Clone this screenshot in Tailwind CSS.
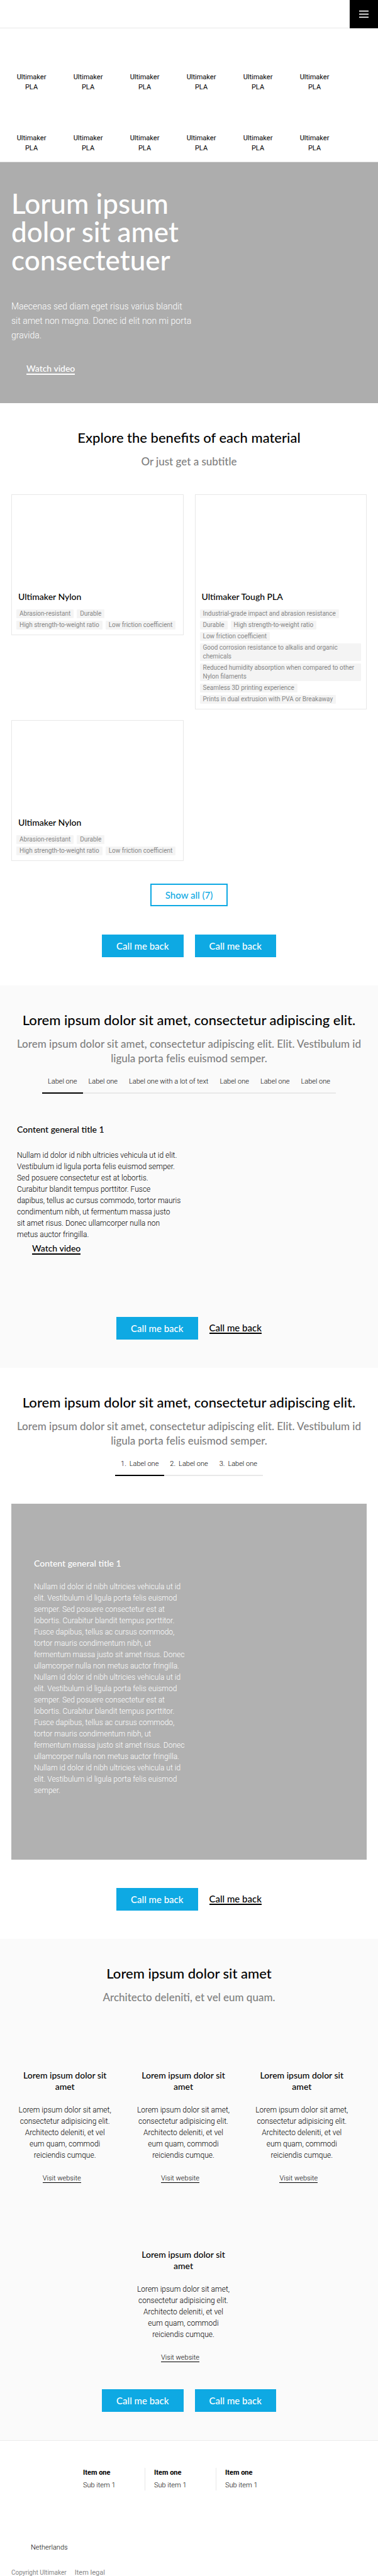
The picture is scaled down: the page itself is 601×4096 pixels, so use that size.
<!DOCTYPE html>
<html lang="en">
<head>
<meta charset="utf-8">
<meta name="viewport" content="width=device-width, initial-scale=1">
<title>Ultimaker materials</title>
<script src="https://cdn.jsdelivr.net/npm/@tailwindcss/browser@4"></script>
</head>
<body class="bg-white font-['Roboto',sans-serif] font-light text-black">

<header class="flex h-[45px] justify-end border-b border-[#e8e8e8]">
  <button type="button" aria-label="Menu" class="h-[45px] w-[45px] bg-black">
    <svg viewBox="0 0 60 60" class="h-[45px] w-[45px]" fill="#fff"><rect x="20" y="22.4" width="20" height="2.2"/><rect x="20" y="28.9" width="20" height="2.2"/><rect x="20" y="35.4" width="20" height="2.2"/></svg>
  </button>
</header>

<nav class="border-b border-[#e0e0e0] pt-[5px] pr-[56px] pb-[13px] pl-[5px]">
  <ul class="grid grid-cols-6 text-center text-[11px] leading-[16px] font-normal">
    <li class="pt-[65px]">Ultimaker<br>PLA</li>
    <li class="pt-[65px]">Ultimaker<br>PLA</li>
    <li class="pt-[65px]">Ultimaker<br>PLA</li>
    <li class="pt-[65px]">Ultimaker<br>PLA</li>
    <li class="pt-[65px]">Ultimaker<br>PLA</li>
    <li class="pt-[65px]">Ultimaker<br>PLA</li>
    <li class="pt-[65px]">Ultimaker<br>PLA</li>
    <li class="pt-[65px]">Ultimaker<br>PLA</li>
    <li class="pt-[65px]">Ultimaker<br>PLA</li>
    <li class="pt-[65px]">Ultimaker<br>PLA</li>
    <li class="pt-[65px]">Ultimaker<br>PLA</li>
    <li class="pt-[65px]">Ultimaker<br>PLA</li>
  </ul>
</nav>

<main>
  <section class="bg-[#adadad] px-[18px] pt-[43px] pb-[45px] text-white">
    <h1 class="font-['Lato',sans-serif] text-[44px] leading-[45px] font-medium">Lorum ipsum<br>dolor sit amet<br>consectetuer</h1>
    <p class="mt-[40px] text-[14px] leading-[23px]">Maecenas sed diam eget risus varius blandit<br>sit amet non magna. Donec id elit non mi porta<br>gravida.</p>
    <div class="mt-[33px] ml-[24px] flex">
      <a href="#" class="border-b-2 border-white font-['Lato',sans-serif] text-[14px] leading-[16px] font-medium">Watch video</a>
    </div>
  </section>

  <section class="px-[18px] pt-[40px] pb-[45px]">
    <h2 class="text-center font-['Lato',sans-serif] text-[22px] leading-[29px] font-medium">Explore the benefits of each material</h2>
    <p class="mt-[12px] text-center font-['Lato',sans-serif] text-[17px] leading-[23px] font-medium text-[#808080]">Or just get a subtitle</p>
    <div class="mt-[41px] grid grid-cols-2 items-start gap-x-[18px] gap-y-[17px]">
      <article class="border border-[#e8e8e8] pt-[152px] pr-[8px] pb-[8px] pl-[7px]">
        <h3 class="pl-[3px] font-['Lato',sans-serif] text-[14px] leading-[20px] font-medium">Ultimaker Nylon</h3>
        <ul class="mt-[10px] flex flex-wrap gap-x-[5px] gap-y-[4px] text-[10px] leading-[14px] font-normal text-[#868686]">
          <li class="rounded-[1px] bg-[#f4f4f4] px-[5px]">Abrasion-resistant</li>
          <li class="rounded-[1px] bg-[#f4f4f4] px-[5px]">Durable</li>
          <li class="rounded-[1px] bg-[#f4f4f4] px-[5px]">High strength-to-weight ratio</li>
          <li class="rounded-[1px] bg-[#f4f4f4] px-[5px]">Low friction coefficient</li>
        </ul>
      </article>
      <article class="border border-[#e8e8e8] pt-[152px] pr-[8px] pb-[8px] pl-[7px]">
        <h3 class="pl-[3px] font-['Lato',sans-serif] text-[14px] leading-[20px] font-medium">Ultimaker Tough PLA</h3>
        <ul class="mt-[10px] flex flex-wrap gap-x-[5px] gap-y-[4px] text-[10px] leading-[14px] font-normal text-[#868686]">
          <li class="rounded-[1px] bg-[#f4f4f4] px-[5px]">Industrial-grade impact and abrasion resistance</li>
          <li class="rounded-[1px] bg-[#f4f4f4] px-[5px]">Durable</li>
          <li class="rounded-[1px] bg-[#f4f4f4] px-[5px]">High strength-to-weight ratio</li>
          <li class="rounded-[1px] bg-[#f4f4f4] px-[5px]">Low friction coefficient</li>
          <li class="w-full rounded-[1px] bg-[#f4f4f4] px-[5px]">Good corrosion resistance to alkalis and organic<br>chemicals</li>
          <li class="w-full rounded-[1px] bg-[#f4f4f4] px-[5px]">Reduced humidity absorption when compared to other<br>Nylon filaments</li>
          <li class="rounded-[1px] bg-[#f4f4f4] px-[5px]">Seamless 3D printing experience</li>
          <li class="rounded-[1px] bg-[#f4f4f4] px-[5px]">Prints in dual extrusion with PVA or Breakaway</li>
        </ul>
      </article>
      <article class="border border-[#e8e8e8] pt-[152px] pr-[8px] pb-[8px] pl-[7px]">
        <h3 class="pl-[3px] font-['Lato',sans-serif] text-[14px] leading-[20px] font-medium">Ultimaker Nylon</h3>
        <ul class="mt-[10px] flex flex-wrap gap-x-[5px] gap-y-[4px] text-[10px] leading-[14px] font-normal text-[#868686]">
          <li class="rounded-[1px] bg-[#f4f4f4] px-[5px]">Abrasion-resistant</li>
          <li class="rounded-[1px] bg-[#f4f4f4] px-[5px]">Durable</li>
          <li class="rounded-[1px] bg-[#f4f4f4] px-[5px]">High strength-to-weight ratio</li>
          <li class="rounded-[1px] bg-[#f4f4f4] px-[5px]">Low friction coefficient</li>
        </ul>
      </article>
    </div>
    <div class="mt-[36px] flex justify-center">
      <button type="button" class="border-2 border-[#0ea9e3] px-[22px] font-['Lato',sans-serif] text-[15px] leading-[32px] font-medium text-[#0ea9e3]">Show all (7)</button>
    </div>
    <div class="mt-[45px] flex justify-center gap-[18px]">
      <button type="button" class="bg-[#0ea9e3] px-[23px] font-['Lato',sans-serif] text-[15px] leading-[36px] font-medium text-white">Call me back</button>
      <button type="button" class="bg-[#0ea9e3] px-[23px] font-['Lato',sans-serif] text-[15px] leading-[36px] font-medium text-white">Call me back</button>
    </div>
  </section>

  <section class="bg-[#fafafa] px-[18px] pt-[40px] pb-[45px]">
    <h2 class="text-center font-['Lato',sans-serif] text-[22px] leading-[29px] font-medium">Lorem ipsum dolor sit amet, consectetur adipiscing elit.</h2>
    <p class="mt-[12px] text-center font-['Lato',sans-serif] text-[17px] leading-[23px] font-medium text-[#808080]">Lorem ipsum dolor sit amet, consectetur adipiscing elit. Elit. Vestibulum id<br>ligula porta felis euismod semper.</p>
    <div class="mt-[18px] flex justify-center text-[11px] leading-[16px]">
      <button type="button" class="border-b-2 border-black px-[9px] pb-[9px]">Label one</button>
      <button type="button" class="border-b-2 border-[#e8e8e8] px-[9px] pb-[9px]">Label one</button>
      <button type="button" class="border-b-2 border-[#e8e8e8] px-[9px] pb-[9px]">Label one with a lot of text</button>
      <button type="button" class="border-b-2 border-[#e8e8e8] px-[9px] pb-[9px]">Label one</button>
      <button type="button" class="border-b-2 border-[#e8e8e8] px-[9px] pb-[9px]">Label one</button>
      <button type="button" class="border-b-2 border-[#e8e8e8] px-[9px] pb-[9px]">Label one</button>
    </div>
    <div class="mt-[47px] pl-[9px]">
      <h3 class="font-['Lato',sans-serif] text-[14px] leading-[20px] font-medium">Content general title 1</h3>
      <p class="mt-[22px] text-[12px] leading-[18px]">Nullam id dolor id nibh ultricies vehicula ut id elit.<br>Vestibulum id ligula porta felis euismod semper.<br>Sed posuere consectetur est at lobortis.<br>Curabitur blandit tempus porttitor. Fusce<br>dapibus, tellus ac cursus commodo, tortor mauris<br>condimentum nibh, ut fermentum massa justo<br>sit amet risus. Donec ullamcorper nulla non<br>metus auctor fringilla.</p>
      <div class="mt-[5px] ml-[24px] flex">
        <a href="#" class="border-b-2 border-black font-['Lato',sans-serif] text-[14px] leading-[16px] font-medium">Watch video</a>
      </div>
    </div>
    <div class="mt-[99px] flex items-center justify-center gap-[18px]">
      <button type="button" class="bg-[#0ea9e3] px-[23px] font-['Lato',sans-serif] text-[15px] leading-[36px] font-medium text-white">Call me back</button>
      <a href="#" class="border-b-2 border-black font-['Lato',sans-serif] text-[15px] leading-[16px] font-medium">Call me back</a>
    </div>
  </section>

  <section class="px-[18px] pt-[40px] pb-[45px]">
    <h2 class="text-center font-['Lato',sans-serif] text-[22px] leading-[29px] font-medium">Lorem ipsum dolor sit amet, consectetur adipiscing elit.</h2>
    <p class="mt-[12px] text-center font-['Lato',sans-serif] text-[17px] leading-[23px] font-medium text-[#808080]">Lorem ipsum dolor sit amet, consectetur adipiscing elit. Elit. Vestibulum id<br>ligula porta felis euismod semper.</p>
    <div class="mt-[18px] flex justify-center text-[11px] leading-[16px]">
      <button type="button" class="flex gap-[5px] border-b-2 border-black px-[9px] pb-[9px]"><span>1.</span><span>Label one</span></button>
      <button type="button" class="flex gap-[5px] border-b-2 border-[#e8e8e8] px-[9px] pb-[9px]"><span>2.</span><span>Label one</span></button>
      <button type="button" class="flex gap-[5px] border-b-2 border-[#e8e8e8] px-[9px] pb-[9px]"><span>3.</span><span>Label one</span></button>
    </div>
    <div class="mt-[44px] bg-[#b1b1b1] px-[36px] pt-[85px] pb-[101px] text-white">
      <h3 class="font-['Lato',sans-serif] text-[14px] leading-[20px] font-medium">Content general title 1</h3>
      <p class="mt-[18px] text-[12px] leading-[18px]">Nullam id dolor id nibh ultricies vehicula ut id<br>elit. Vestibulum id ligula porta felis euismod<br>semper. Sed posuere consectetur est at<br>lobortis. Curabitur blandit tempus porttitor.<br>Fusce dapibus, tellus ac cursus commodo,<br>tortor mauris condimentum nibh, ut<br>fermentum massa justo sit amet risus. Donec<br>ullamcorper nulla non metus auctor fringilla.<br>Nullam id dolor id nibh ultricies vehicula ut id<br>elit. Vestibulum id ligula porta felis euismod<br>semper. Sed posuere consectetur est at<br>lobortis. Curabitur blandit tempus porttitor.<br>Fusce dapibus, tellus ac cursus commodo,<br>tortor mauris condimentum nibh, ut<br>fermentum massa justo sit amet risus. Donec<br>ullamcorper nulla non metus auctor fringilla.<br>Nullam id dolor id nibh ultricies vehicula ut id<br>elit. Vestibulum id ligula porta felis euismod<br>semper.</p>
    </div>
    <div class="mt-[45px] flex items-center justify-center gap-[18px]">
      <button type="button" class="bg-[#0ea9e3] px-[23px] font-['Lato',sans-serif] text-[15px] leading-[36px] font-medium text-white">Call me back</button>
      <a href="#" class="border-b-2 border-black font-['Lato',sans-serif] text-[15px] leading-[16px] font-medium">Call me back</a>
    </div>
  </section>

  <section class="bg-[#fafafa] pt-[40px] pb-[45px]">
    <h2 class="text-center font-['Lato',sans-serif] text-[22px] leading-[29px] font-medium">Lorem ipsum dolor sit amet</h2>
    <p class="mt-[12px] text-center font-['Lato',sans-serif] text-[17px] leading-[23px] font-medium text-[#808080]">Architecto deleniti, et vel eum quam.</p>
    <div class="flex flex-wrap justify-center pr-[27px] pl-[9px] text-center">
      <article class="w-1/3 pt-[104px] pb-[1px]">
        <h3 class="font-['Lato',sans-serif] text-[14px] leading-[18px] font-medium">Lorem ipsum dolor sit<br>amet</h3>
        <p class="mt-[19px] text-[12px] leading-[18px]">Lorem ipsum dolor sit amet,<br>consectetur adipisicing elit.<br>Architecto deleniti, et vel<br>eum quam, commodi<br>reiciendis cumque.</p>
        <div class="mt-[22px] flex justify-center pr-[10px]"><a href="#" class="border-b border-black text-[11px] leading-[12px]">Visit website</a></div>
      </article>
      <article class="w-1/3 pt-[104px] pb-[1px]">
        <h3 class="font-['Lato',sans-serif] text-[14px] leading-[18px] font-medium">Lorem ipsum dolor sit<br>amet</h3>
        <p class="mt-[19px] text-[12px] leading-[18px]">Lorem ipsum dolor sit amet,<br>consectetur adipisicing elit.<br>Architecto deleniti, et vel<br>eum quam, commodi<br>reiciendis cumque.</p>
        <div class="mt-[22px] flex justify-center pr-[10px]"><a href="#" class="border-b border-black text-[11px] leading-[12px]">Visit website</a></div>
      </article>
      <article class="w-1/3 pt-[104px] pb-[1px]">
        <h3 class="font-['Lato',sans-serif] text-[14px] leading-[18px] font-medium">Lorem ipsum dolor sit<br>amet</h3>
        <p class="mt-[19px] text-[12px] leading-[18px]">Lorem ipsum dolor sit amet,<br>consectetur adipisicing elit.<br>Architecto deleniti, et vel<br>eum quam, commodi<br>reiciendis cumque.</p>
        <div class="mt-[22px] flex justify-center pr-[10px]"><a href="#" class="border-b border-black text-[11px] leading-[12px]">Visit website</a></div>
      </article>
      <article class="w-1/3 pt-[104px] pb-[1px]">
        <h3 class="font-['Lato',sans-serif] text-[14px] leading-[18px] font-medium">Lorem ipsum dolor sit<br>amet</h3>
        <p class="mt-[19px] text-[12px] leading-[18px]">Lorem ipsum dolor sit amet,<br>consectetur adipisicing elit.<br>Architecto deleniti, et vel<br>eum quam, commodi<br>reiciendis cumque.</p>
        <div class="mt-[22px] flex justify-center pr-[10px]"><a href="#" class="border-b border-black text-[11px] leading-[12px]">Visit website</a></div>
      </article>
    </div>
    <div class="mt-[42px] flex justify-center gap-[18px]">
      <button type="button" class="bg-[#0ea9e3] px-[23px] font-['Lato',sans-serif] text-[15px] leading-[36px] font-medium text-white">Call me back</button>
      <button type="button" class="bg-[#0ea9e3] px-[23px] font-['Lato',sans-serif] text-[15px] leading-[36px] font-medium text-white">Call me back</button>
    </div>
  </section>
</main>

<footer class="border-t border-[#ececec] pt-[43px] text-[11px] leading-[16px]">
  <div class="grid grid-cols-3 pr-[144px] pl-[118px]">
    <div class="border-r border-[#e8e8e8] pl-[14px]">
      <h4 class="font-bold">Item one</h4>
      <a href="#" class="mt-[4px] block">Sub item 1</a>
    </div>
    <div class="border-r border-[#e8e8e8] pl-[14px]">
      <h4 class="font-bold">Item one</h4>
      <a href="#" class="mt-[4px] block">Sub item 1</a>
    </div>
    <div class="pl-[14px]">
      <h4 class="font-bold">Item one</h4>
      <a href="#" class="mt-[4px] block">Sub item 1</a>
    </div>
  </div>
  <p class="mt-[83px] pl-[49px]">Netherlands</p>
  <div class="mt-[26px] flex items-baseline gap-[13px] px-[18px] leading-[11px] font-normal text-[#868686]">
    <p class="text-[10px]">Copyright Ultimaker</p>
    <a href="#">Item legal</a>
  </div>
</footer>
</body>
</html>
